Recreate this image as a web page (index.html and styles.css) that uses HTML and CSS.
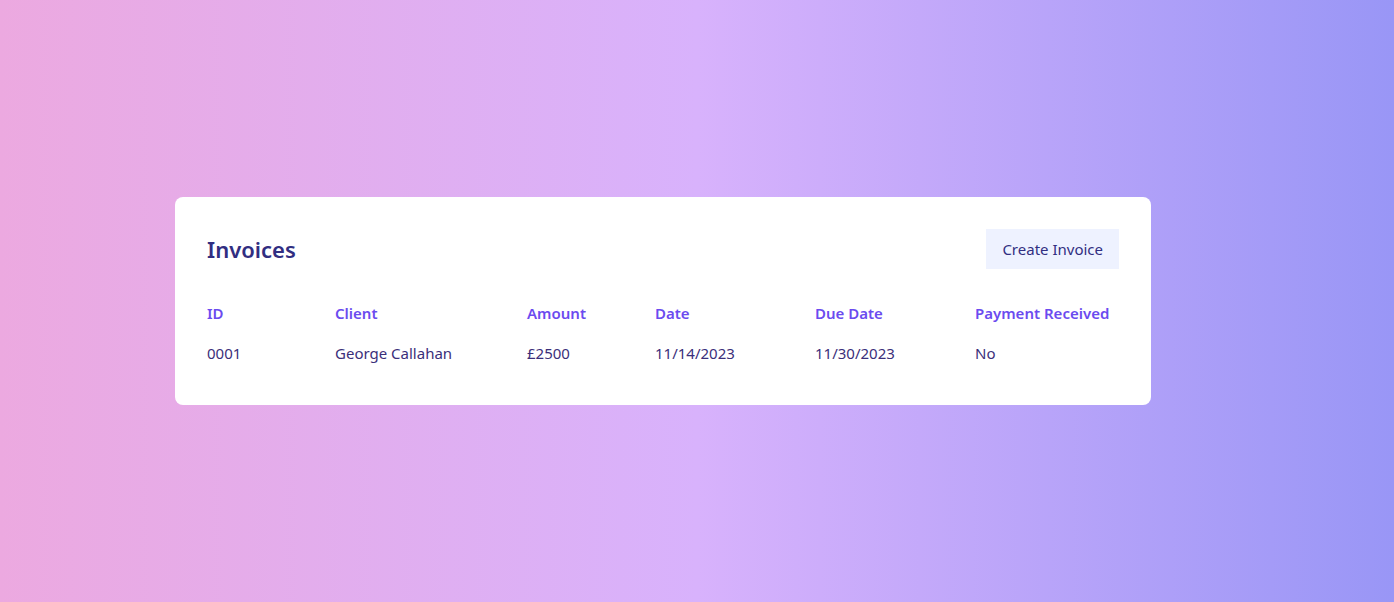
FILE: index.html
```
<!DOCTYPE html>
<html lang="en">
<head>
    <meta charset="UTF-8">
    <meta name="viewport" content="width=device-width, initial-scale=1.0">
    <title>Invoices</title>
    <link rel="stylesheet" href="styles.css">
</head>
<body>
    <div class="card">
        <div class="card-header">
            <h1>Invoices</h1>
            <button class="btn">Create Invoice</button>
        </div>

        <table class="invoices">
            <colgroup>
                <col class="col-id">
                <col class="col-client">
                <col class="col-amount">
                <col class="col-date">
                <col class="col-due">
                <col>
            </colgroup>
            <thead>
                <tr>
                    <th>ID</th>
                    <th>Client</th>
                    <th>Amount</th>
                    <th>Date</th>
                    <th>Due Date</th>
                    <th>Payment Received</th>
                </tr>
            </thead>
            <tbody>
                <tr>
                    <td>0001</td>
                    <td>George Callahan</td>
                    <td>£2500</td>
                    <td>11/14/2023</td>
                    <td>11/30/2023</td>
                    <td>No</td>
                </tr>
            </tbody>
        </table>
    </div>
</body>
</html>
```

FILE: styles.css
```
* {
    box-sizing: border-box;
}

body {
    margin: 0;
    min-height: 100vh;
    display: flex;
    align-items: center;
    font-family: 'Segoe UI', 'Noto Sans', sans-serif;
    background: linear-gradient(90deg, #eca9e0 0%, #d8b2fc 50%, #9996f6 100%);
    color: #3b2f7a;
}

.card {
    width: 976px;
    margin-left: 175px;
    padding: 32px;
    background: #fff;
    border-radius: 8px;
}

.card-header {
    display: flex;
    justify-content: space-between;
    align-items: center;
    margin-bottom: 24px;
}

.card-header h1 {
    margin: 0;
    font-size: 22px;
    font-weight: 600;
    color: #312e81;
}

.btn {
    height: 40px;
    padding: 0 16px;
    border: none;
    background: #eef2ff;
    color: #312e81;
    font-family: inherit;
    font-size: 15px;
    cursor: pointer;
}

.invoices {
    width: 100%;
    border-collapse: collapse;
    table-layout: fixed;
}

.col-id { width: 128px; }
.col-client { width: 192px; }
.col-amount { width: 128px; }
.col-date { width: 160px; }
.col-due { width: 160px; }

.invoices th,
.invoices td {
    padding: 8px 0;
    text-align: left;
    font-size: 15px;
    line-height: 24px;
    white-space: nowrap;
}

.invoices th {
    font-weight: 600;
    color: #6b4bef;
}
```
